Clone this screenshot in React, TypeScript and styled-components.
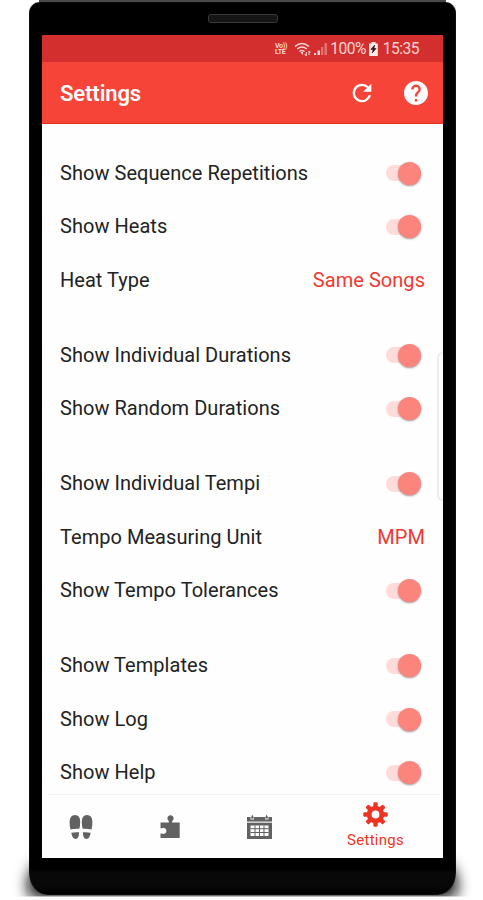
import React from "react";
import styled, { createGlobalStyle } from "styled-components";

const GlobalStyle = createGlobalStyle`
  * { box-sizing: border-box; }
  body { margin: 0; background: #fff; font-family: Roboto, "Liberation Sans", sans-serif; }
`;

const Stage = styled.main`
  position: relative;
  width: 483px;
  height: 900px;
  padding: 2px 0 0 29px;
  overflow: hidden;
  background: #fff;
`;

const GroundShadow = styled.svg`
  position: absolute;
  left: 0;
  bottom: 0;
`;

const TopEdge = styled.div`
  position: absolute;
  top: 0;
  left: 39px;
  width: 407px;
  height: 6px;
  background: #484848;
`;

const Phone = styled.div`
  position: relative;
  width: 427px;
  height: 893px;
  padding: 0 13px;
  border-radius: 11px 11px 18px 18px / 11px 11px 22px 22px;
  background: linear-gradient(#000 0 867px, #080808 870px 884px, #000 891px);
  box-shadow: inset 0 0 1px #888;
`;

const Earpiece = styled.div`
  height: 33px;
  display: flex;
  justify-content: center;
  padding: 12px 0 0 0;

  &::before {
    content: "";
    width: 68px;
    height: 7px;
    border: 1px solid #393939;
    border-radius: 3px;
    background: #151515;
  }
`;

const Screen = styled.div`
  width: 401px;
  height: 823px;
  display: flex;
  flex-direction: column;
  overflow: hidden;
  background: #fefefe;
`;

const StatusBar = styled.div`
  flex: none;
  height: 27px;
  display: flex;
  align-items: center;
  justify-content: flex-end;
  padding: 1px 24px 0 0;
  background: #d32f2f;
  color: #fbd5d3;
  font-size: 15.6px;

  svg { flex: none; }
`;

const StatusText = styled.span<{ $width: number }>`
  width: ${(p) => p.$width}px;
  text-align: right;
  white-space: nowrap;
  letter-spacing: -0.5px;
`;

const AppBar = styled.header`
  flex: none;
  height: 62px;
  display: flex;
  align-items: center;
  padding: 0 15px 0 18px;
  background: #f64538;
  border-bottom: 1px solid #e5301f;
  color: #fff;
`;

const Title = styled.h1`
  flex: 1;
  margin: 0;
  padding-top: 2px;
  font-size: 22px;
  font-weight: 600;
  letter-spacing: -0.1px;
`;

const BarActions = styled.div`
  display: flex;
  align-items: center;
  gap: 28px;
`;

const List = styled.div`
  position: relative;
  flex: 1;
  min-height: 0;
  padding: 22px 18px 0;
  overflow: hidden;
`;

const Group = styled.section`
  margin-bottom: 21.5px;
`;

const Row = styled.div`
  height: 53.5px;
  display: flex;
  align-items: center;
  justify-content: space-between;
  color: #222;
  font-size: 20px;
  letter-spacing: 0.04px;
  white-space: nowrap;
`;

const Value = styled.span`
  color: #ee3a32;
`;

const Track = styled.span`
  width: 35px;
  height: 16px;
  margin: 1px 4px 0 0;
  display: flex;
  align-items: center;
  justify-content: flex-end;
  border-radius: 8px;
  background: #ffdcda;
`;

const Thumb = styled.span`
  width: 23px;
  height: 23px;
  border-radius: 50%;
  background: #fb857d;
  box-shadow: 0 1px 2px rgba(90, 50, 50, 0.5);
`;

const EdgeHandle = styled.div`
  position: absolute;
  top: 228px;
  right: -2px;
  width: 8px;
  height: 149px;
  border: 2px solid #ececec;
  border-right: 0;
  border-radius: 6px 0 0 6px;
  background: #fff;
`;

const BottomNav = styled.nav`
  flex: none;
  height: 64px;
  margin-left: 6px;
  display: grid;
  grid-template-columns: 66px 112px 66px 151px;
  border-top: 1px solid #f3f3f3;
  color: #626262;
`;

const Tab = styled.div<{ $active?: boolean }>`
  display: flex;
  flex-direction: column;
  align-items: center;
  justify-content: ${(p) => (p.$active ? "flex-start" : "center")};
  padding-top: ${(p) => (p.$active ? "7px" : "0")};
  padding-left: ${(p) => (p.$active ? "16px" : "0")};
  color: ${(p) => (p.$active ? "#ed3323" : "inherit")};
`;

const TabLabel = styled.span`
  margin-top: 4px;
  font-size: 15px;
  line-height: 18px;
  letter-spacing: 0.25px;
`;

type Setting = { label: string; value?: string };

const groups: Setting[][] = [
  [{ label: "Show Sequence Repetitions" }, { label: "Show Heats" }, { label: "Heat Type", value: "Same Songs" }],
  [{ label: "Show Individual Durations" }, { label: "Show Random Durations" }],
  [{ label: "Show Individual Tempi" }, { label: "Tempo Measuring Unit", value: "MPM" }, { label: "Show Tempo Tolerances" }],
  [{ label: "Show Templates" }, { label: "Show Log" }, { label: "Show Help" }],
];

const VolteMark = styled.span`
  width: 14px;
  margin-right: 5px;
  font-size: 7px;
  line-height: 6.5px;
  font-weight: 700;
  letter-spacing: -0.3px;
`;

const WifiIcon = () => (
  <svg width="17" height="15" viewBox="0 0 17 15" fill="none" stroke="currentColor" strokeWidth="1.4">
    <path d="M1 4.5Q8-1.5 15 4.5M3.2 7Q8 3 12.8 7M5.5 9.5Q8 7.5 10.5 9.5" />
    <path d="M6.5 10.5 9 13V9.5z" fill="currentColor" stroke="none" />
    <path d="M12.3 14V10M10.8 12l1.5 2M15 9v4M15 9l1.2 2" strokeWidth="1" />
  </svg>
);

const SignalIcon = () => (
  <svg width="17" height="14" viewBox="-2 0 17 14" fill="currentColor">
    <path d="M1 11h2v2H1zM4.5 8.5H7V13H4.5z" />
    <path d="M8 5h2.3v8H8zM11.4 1H14v12h-2.6z" opacity=".4" />
  </svg>
);

const BatteryIcon = () => (
  <svg width="13" height="14" viewBox="-2.5 0 13 14">
    <path d="M3 0h4v1.5h2.3V14H.5V1.5H3z" fill="#ffe9e8" />
    <path d="M6.2 3 2.4 7.4h2.2L3.8 11 7.6 6.5H5.4z" fill="#2a1718" stroke="#2a1718" strokeWidth=".6" />
  </svg>
);

const RefreshIcon = () => (
  <svg width="28" height="28" viewBox="0 0 24 24" fill="currentColor">
    <path d="M17.65 6.35A7.95 7.95 0 0 0 12 4a8 8 0 1 0 7.73 10h-2.08A6 6 0 1 1 12 6c1.66 0 3.14.69 4.22 1.78L13 11h7V4z" />
  </svg>
);

const HelpIcon = () => (
  <svg width="24" height="24" viewBox="2 2 20 20" fill="currentColor">
    <path d="M12 2C6.48 2 2 6.48 2 12s4.48 10 10 10 10-4.48 10-10S17.52 2 12 2zm1 17h-2v-2h2v2zm2.07-7.75-.9.92C13.45 12.9 13 13.5 13 15h-2v-.5c0-1.1.45-2.1 1.17-2.83l1.24-1.26c.37-.36.59-.86.59-1.41a2 2 0 0 0-4 0H8a4 4 0 0 1 8 0c0 .88-.36 1.68-.93 2.25z" />
  </svg>
);

const FootprintsIcon = () => (
  <svg width="24" height="26" viewBox="0 0 24 26" fill="currentColor">
    <path d="M1.500 15.500Q.6 12.500.6 8 .8 1 6 1t5.200 7q0 4-.9 6.800Q6 14.300 1.500 15.500z" />
    <path d="M22.500 15.500q.9-3 .9-7.500Q23.200 1 18 1t-5.200 7q0 4 .9 6.800 4.300-.5 8.800.7z" />
    <path d="M2.300 18.800q3.700-.9 7.800-.5 0 6.700-3.500 6.700-3.300 0-4.300-6.200zM21.700 18.800q-3.700-.9-7.800-.5 0 6.700 3.500 6.700 3.300 0 4.300-6.200z" />
  </svg>
);

const PuzzleIcon = () => (
  <svg width="20" height="24" viewBox="0 0 20 24" fill="currentColor">
    <path d="M.5 7.500h8.300V6A3.100 3.100 0 1 1 12.200 6v1.500h7.500V23H.5v-4.500h1.400a3 3 0 1 0 0-5.200H.5z" />
  </svg>
);

const CalendarIcon = () => (
  <svg width="25" height="25" viewBox="0 0 25 25" fill="currentColor">
    <path d="M0 3h3.500v2.500H7V3h11v2.500h3.500V3H25v5H0z" />
    <path d="m3.500 4.500 2-4 1.500 4zM18 4.500l1.500-4 2 4z" />
    <path fillRule="evenodd" d="M0 9h25v16H0zM3.500 11.500v10.500h18V11.500z" />
    <path d="M3.500 14.700h18M3.500 18.500h18M8 11.500v10.500M12.500 11.500v10.500M17 11.500v10.500" stroke="currentColor" strokeWidth="1" />
    <path d="M0 7.800h25" stroke="#aaa" strokeWidth="1.500" />
  </svg>
);

const GearIcon = () => (
  <svg width="25" height="25" viewBox="0 0 25 25">
    <g fill="currentColor">
      {[0, 45, 90, 135, 180, 225, 270, 315].map((angle) => (
        <path key={angle} d="M10.300 5.500V1.700q0-1.400 1.300-1.400h1.800q1.300 0 1.300 1.400v3.800z" transform={`rotate(${angle} 12.500 12.500)`} />
      ))}
    </g>
    <circle cx="12.500" cy="12.500" r="6.300" fill="none" stroke="currentColor" strokeWidth="4.800" />
  </svg>
);

const Shadow = () => (
  <GroundShadow width="483" height="60" viewBox="0 0 483 60">
    <defs>
      <filter id="soft" x="-10%" y="-100%" width="120%" height="300%">
        <feGaussianBlur stdDeviation="7 8" />
      </filter>
      <clipPath id="floor"><path d="M0 0h483v56.500H0z" /></clipPath>
    </defs>
    <g clipPath="url(#floor)">
      <path d="M33 26h419l7 22-6 10H32l-6-10z" fill="#111" filter="url(#soft)" />
    </g>
  </GroundShadow>
);

export default function App() {
  return (
    <Stage>
      <GlobalStyle />
      <Shadow />
      <TopEdge />
      <Phone>
        <Earpiece />
        <Screen>
          <StatusBar>
            <VolteMark>Vo))<br />LTE</VolteMark>
            <WifiIcon />
            <SignalIcon />
            <StatusText $width={38}>100%</StatusText>
            <BatteryIcon />
            <StatusText $width={40}>15:35</StatusText>
          </StatusBar>
          <AppBar>
            <Title>Settings</Title>
            <BarActions>
              <RefreshIcon />
              <HelpIcon />
            </BarActions>
          </AppBar>
          <List>
            {groups.map((group) => (
              <Group key={group[0].label}>
                {group.map(({ label, value }) => (
                  <Row key={label}>
                    <span>{label}</span>
                    {value ? <Value>{value}</Value> : <Track><Thumb /></Track>}
                  </Row>
                ))}
              </Group>
            ))}
            <EdgeHandle />
          </List>
          <BottomNav>
            <Tab><FootprintsIcon /></Tab>
            <Tab><PuzzleIcon /></Tab>
            <Tab><CalendarIcon /></Tab>
            <Tab $active>
              <GearIcon />
              <TabLabel>Settings</TabLabel>
            </Tab>
          </BottomNav>
        </Screen>
      </Phone>
    </Stage>
  );
}
